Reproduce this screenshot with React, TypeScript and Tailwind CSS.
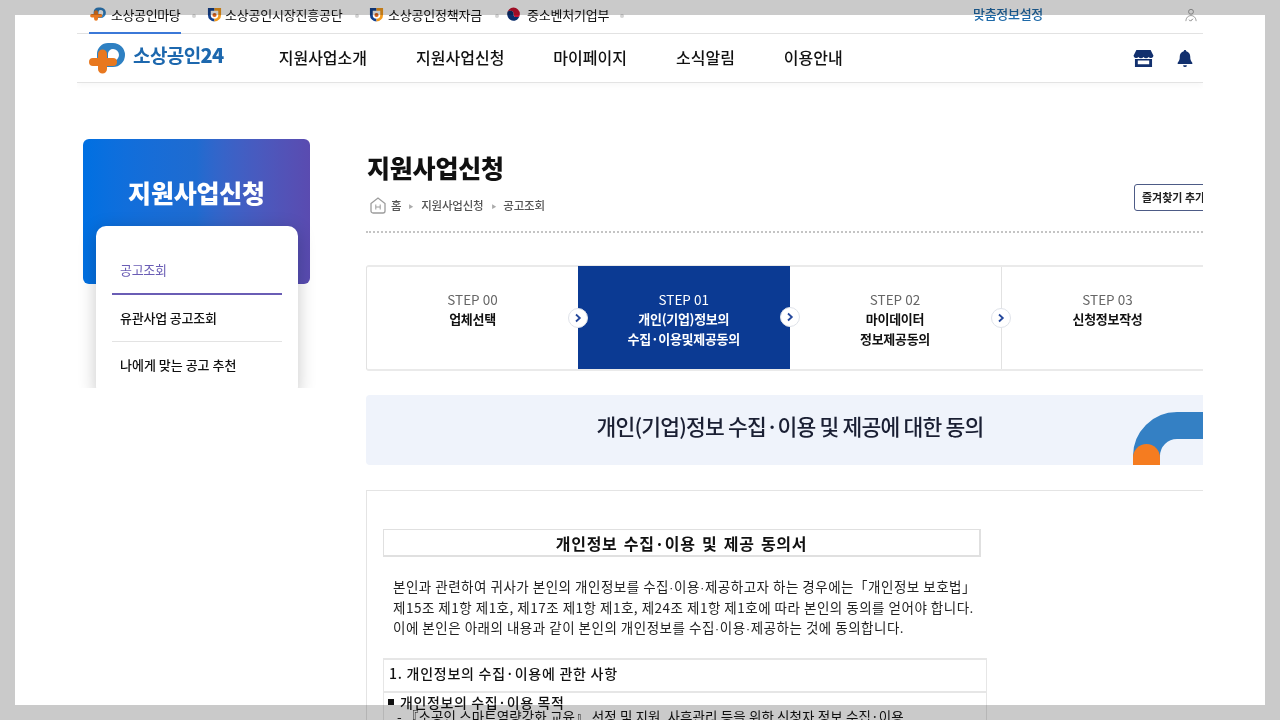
// App.tsx
// 소상공인24 — 지원사업신청 step 01 consent page.
const TOP_LINKS = [
  { label: '소상공인시장진흥공단', icon: 'emblem', left: 'ml-[11px]', gap: 'ml-[3px]', width: 'w-[117px]', dot: 'ml-[13px]' },
  { label: '소상공인정책자금', icon: 'emblem', left: 'ml-[10px]', gap: 'ml-[4px]', width: 'w-[93px]', dot: 'ml-[14px]' },
  { label: '중소벤처기업부', icon: 'taegeuk', left: 'ml-[7px]', gap: 'ml-[6px]', width: 'w-[82px]', dot: 'ml-[11px]' },
];

const NAV = ['지원사업소개', '지원사업신청', '마이페이지', '소식알림', '이용안내'];

const STEPS = [
  { no: 'STEP 00', lines: ['업체선택'], width: 'w-[211px]' },
  { no: 'STEP 01', lines: ['개인(기업)정보의', '수집·이용및제공동의'], active: true, width: 'w-[211.500px]' },
  { no: 'STEP 02', lines: ['마이데이터', '정보제공동의'], width: 'w-[212px]' },
  { no: 'STEP 03', lines: ['신청정보작성'], width: 'w-[212px]' },
];

function LogoMark({ className }: { className: string }) {
  return (
    <svg viewBox="0 0 36 32" className={className}>
      <path d="M8 16V12A11 11 0 0 1 19 1h5a12 12 0 0 1 0 24h-6v-6h6a6 6 0 0 0 0-12 5 5 0 0 0-5 5v4z" fill="#2e80c2" />
      <path d="M9 12a4.500 4.500 0 0 1 9 0v4h6a4 4 0 0 1 0 8h-6v3a4.500 4.500 0 0 1-9 0v-3H4a4 4 0 0 1 0-8h5z" fill="#e8781f" />
    </svg>
  );
}

function Emblem() {
  return (
    <svg viewBox="0 0 16 16" className="h-[15px] w-[15px] shrink-0" fill="none">
      <path d="M8 2.500H2.500v6a5.500 5.500 0 0 0 5.500 5.500" stroke="#14418f" strokeWidth="3" />
      <path d="M8 2.500h5.500v6A5.500 5.500 0 0 1 8 14" stroke="#f39a1c" strokeWidth="3" />
      <circle cx="8" cy="8.500" r="2.200" fill="#d9621c" />
    </svg>
  );
}

function Taegeuk() {
  return (
    <svg viewBox="1.500 1 13 13" className="h-[15px] w-[15px] shrink-0">
      <circle cx="8" cy="7.500" r="6.500" fill="#fff" />
      <path d="M2.500 7a5.500 5.500 0 0 1 11 0 2.750 2.750 0 0 1-5.500 0 2.750 2.750 0 0 0-5.500 0z" fill="#c8102e" />
      <path d="M2.500 7a2.750 2.750 0 0 1 5.500 0 2.750 2.750 0 0 0 5.500 0c0 3-2.500 6-5.500 6S2.500 10 2.500 7z" fill="#0b2d6b" />
    </svg>
  );
}

function Dot() {
  return <span className="mt-[3px] block h-[4px] w-[4px] shrink-0 rounded-full bg-[#d4d4d4]" />;
}

function Mid() {
  return <span className="font-['Liberation_Sans',sans-serif] leading-[0]">·</span>;
}

function StepArrow() {
  return (
    <span className="absolute right-[-10px] top-[41px] z-10 flex h-[20px] w-[20px] items-center justify-center rounded-full border border-[#dfe3ea] bg-white">
      <svg viewBox="0 0 10 10" className="h-[10px] w-[10px]">
        <path d="M3 1.500 6.800 5 3 8.500" fill="none" stroke="#24479b" strokeWidth="1.800" />
      </svg>
    </span>
  );
}

export default function App() {
  return (
    <div className="relative h-[720px] w-[1280px] overflow-hidden bg-white font-['Noto_Sans_CJK_KR','Noto_Sans',sans-serif] text-[#111]">
      <div className="ml-[77px] h-[720px] w-[1126px] overflow-hidden">
        {/* top util bar */}
        <div className="flex h-[34px] items-start border-b border-[#e3e3e3] pl-[12px]">
          <div className="flex h-[34px] w-[92px] items-center border-b-2 border-[#3b78d8] pb-[4px] pl-[1px]">
            <LogoMark className="h-[14px] w-[16px] shrink-0" />
            <span className="ml-[5px] whitespace-nowrap text-[13px] leading-none tracking-[-0.4px]">소상공인마당</span>
          </div>
          <div className="flex h-[29px] items-center">
            <span className="ml-[11px]"><Dot /></span>
            {TOP_LINKS.map(l => (
              <div key={l.label} className="flex items-center">
                <div className={`flex items-center ${l.left}`}>
                  {l.icon === 'emblem' ? <Emblem /> : <Taegeuk />}
                  <span className={`${l.gap} ${l.width} whitespace-nowrap text-[13px] leading-none tracking-[-0.2px]`}>{l.label}</span>
                </div>
                <span className={l.dot}><Dot /></span>
              </div>
            ))}
          </div>
          <span className="ml-[349px] mt-[6px] whitespace-nowrap text-[13px] font-medium leading-[16px] tracking-[-0.3px] text-[#1f6aa8]">맞춤정보설정</span>
          <svg viewBox="0 0 14 16" className="ml-auto mr-[5px] mt-[8px] h-[15px] w-[14px]" fill="none" stroke="#9a9a9a" strokeWidth="1">
            <circle cx="7" cy="4" r="2.600" />
            <path d="M1.500 14c0-3.500 2.500-6 5.500-6s5.500 2.500 5.500 6" />
            <path d="M5 12.500l1.500 1.500 2.500-2.500" stroke="#777" />
          </svg>
        </div>

        {/* main nav */}
        <div className="flex h-[49px] items-center border-b border-[#e3e3e3] pl-[12px] pr-[10px] shadow-[0_3px_6px_rgba(0,0,0,0.03)]">
          <LogoMark className="h-[32px] w-[36px] shrink-0" />
          <span className="ml-[8px] whitespace-nowrap pb-[6px] text-[19px] font-bold leading-none tracking-[-0.6px] text-[#1d68ae]">소상공인<span className="text-[20px] font-black">24</span></span>
          <nav className="ml-[55px] flex items-center gap-[49px] pb-[3px]">
            {NAV.map(n => (
              <span key={n} className="whitespace-nowrap text-[16px] font-medium leading-none">{n}</span>
            ))}
          </nav>
          <svg viewBox="0 0 22 20" className="ml-auto h-[19px] w-[21px]">
            <path d="M3.500 1h15L21.500 7a3 3 0 0 1-5.200 1.500A3.400 3.400 0 0 1 11 8.500a3.400 3.400 0 0 1-5.300 0A3 3 0 0 1 .5 7z" fill="#12306e" />
            <path d="M2 10.500h18V19H2zM5 12v4h12v-4z" fill="#12306e" fillRule="evenodd" />
          </svg>
          <svg viewBox="0 0 16 20" className="ml-[23px] h-[19px] w-[16px]">
            <path d="M8 1c.8 0 1.300.6 1.300 1.300C12 3 13.500 5.300 13.500 8c0 3.500.8 5 2.200 6.500v1.300H.3v-1.300C1.700 13 2.500 11.500 2.500 8c0-2.700 1.500-5 4.200-5.700C6.700 1.600 7.200 1 8 1zM6 17h4a2 2 0 0 1-4 0z" fill="#12306e" />
          </svg>
        </div>

        <div className="flex items-start">
          {/* sidebar */}
          <aside className="ml-[6px] mt-[56px] w-[227px] shrink-0">
            <div className="flex h-[145px] justify-center rounded-[6px] bg-gradient-to-r from-[#0070e2] via-[#1f6bd0] via-50% to-[#5a4bb0] pt-[36px]">
              <h2 className="whitespace-nowrap text-[25px] font-black leading-[34px] tracking-[-0.2px] text-white">지원사업신청</h2>
            </div>
            <div className="-mx-[20px] -mt-[74px] h-[178px] overflow-hidden pl-[33px] pr-[32px] pt-[16px]">
              <ul className="h-[170px] rounded-[10px] bg-white px-[16px] pt-[20px] shadow-[0_4px_18px_rgba(0,0,0,0.22)]">
                <li className="flex h-[49px] items-center border-b-2 border-[#6a5db5] pl-[8px] text-[13px] leading-none tracking-[-0.3px] text-[#6a5db5]">공고조회</li>
                <li className="flex h-[47px] items-center border-b border-[#e3e3e3] pb-[2px] pl-[8px] text-[13px] font-medium leading-none tracking-[-0.2px]">유관사업 공고조회</li>
                <li className="flex h-[47px] items-center border-b border-[#e3e3e3] pb-[2px] pl-[8px] text-[13px] font-medium leading-none">나에게 맞는 공고 추천</li>
              </ul>
            </div>
          </aside>

          {/* main column */}
          <main className="ml-[56px] min-w-0 flex-1">
            <h1 className="mt-[67px] whitespace-nowrap pl-[1px] text-[25px] font-black leading-[34px] tracking-[-0.2px]">지원사업신청</h1>
            <div className="mt-[9px] flex h-[38px] items-start justify-between">
              <div className="mt-[4px] flex items-center pl-[4px] text-[11.500px] font-medium leading-none tracking-[-0.2px] text-[#555]">
                <svg viewBox="0 0 16 17" className="h-[17px] w-[16px]" fill="none" stroke="#9c9c9c" strokeWidth="1.300">
                  <path d="M1 6.500 8 1l7 5.500V14a2 2 0 0 1-2 2H3a2 2 0 0 1-2-2z" />
                  <path d="M5.800 7.500v5M10.200 7.500v5M5.800 10h4.400" strokeWidth="1" />
                </svg>
                <span className="ml-[5px]">홈</span>
                <span className="ml-[7px] text-[5px] text-[#aaa]">▶</span>
                <span className="ml-[8px]">지원사업신청</span>
                <span className="ml-[8px] text-[5px] text-[#aaa]">▶</span>
                <span className="ml-[7px]">공고조회</span>
              </div>
              <button className="-mt-[9px] -mr-[20px] h-[27px] w-[89px] shrink-0 whitespace-nowrap rounded-[3px] border-[1.500px] border-[#4d5b86] bg-white pl-[2px] text-left text-[11px] font-bold leading-none text-[#222]">
                <span className="pl-[5px]">즐겨찾기 추가</span>
              </button>
            </div>
            <div className="h-0 border-b-2 border-dotted border-[#c4c4c4]" />

            {/* steps */}
            <div className="mt-[32px] flex h-[106px] w-[860px] rounded-l-[3px] border-y-2 border-l border-[#eaeaea] border-l-[#e2e2e2]">
              {STEPS.map((s, i) => (
                <div
                  key={s.no}
                  className={`relative shrink-0 text-center ${s.width} ${s.active ? '-mt-[1px] h-[103px] self-start bg-[#0b3a93] pt-[24px] text-white' : 'h-full pt-[23px]'} ${i === 2 ? 'border-r border-[#e2e2e2]' : ''}`}
                >
                  <p className={`text-[13.500px] leading-[19px] ${s.active ? 'text-white' : 'text-[#666]'}`}>{s.no}</p>
                  {s.lines.map(l => (
                    <p key={l} className="text-[13px] font-bold leading-[19.500px] tracking-[-0.3px]">{l}</p>
                  ))}
                  {i < 3 && <StepArrow />}
                </div>
              ))}
            </div>

            {/* banner */}
            <div className="mt-[24px] flex h-[70px] w-[837px] items-center overflow-hidden rounded-l-[4px] bg-[#eff3fb]">
              <p className="w-[837px] shrink-0 whitespace-nowrap pb-[8px] pl-[11px] text-center text-[21.500px] font-medium leading-none tracking-[-0.8px] text-[#1a1f33]">개인(기업)정보 수집·이용 및 제공에 대한 동의</p>
              <svg viewBox="0 0 70 53" className="-ml-[70px] h-[53px] w-[70px] shrink-0 self-end">
                <path d="M13.500 53V44A30.500 30.500 0 0 1 44 13.500h26" fill="none" stroke="#3480c4" strokeWidth="27" />
                <path d="M0 53V45.500a13.500 13.500 0 0 1 27 0V53z" fill="#f57c20" />
              </svg>
            </div>

            {/* consent doc */}
            <div className="mt-[25px] h-[240px] border-l border-t border-[#e4e4e4] pl-[16px] pt-[38px]">
              <div className="flex h-[28px] w-[598px] items-center justify-center border-2 border-[#e0e0e0] border-l border-t text-[16px] font-bold leading-none tracking-[0.7px] [word-spacing:2px]">개인정보 수집·이용 및 제공 동의서</div>
              <div className="ml-[10px] mt-[19px] w-[600px] whitespace-nowrap text-[13.500px] leading-[20.500px] tracking-[0.5px] text-[#222]">
                <p>본인과 관련하여 귀사가 본인의 개인정보를 수집<Mid />이용<Mid />제공하고자 하는 경우에는「개인정보 보호법」</p>
                <p>제15조 제1항 제1호, 제17조 제1항 제1호, 제24조 제1항 제1호에 따라 본인의 동의를 얻어야 합니다.</p>
                <p>이에 본인은 아래의 내용과 같이 본인의 개인정보를 수집<Mid />이용<Mid />제공하는 것에 동의합니다.</p>
              </div>
              <div className="mt-[20px] w-[604px] border-l border-r border-t-2 border-[#e6e6e6]">
                <div className="flex h-[33px] items-center border-b-2 border-[#e6e6e6] pb-[5px] pl-[5px] text-[14px] font-medium leading-none tracking-[0.75px]">1. 개인정보의 수집·이용에 관한 사항</div>
                <div className="flex items-center pl-[4px] pt-[2px] text-[14px] font-medium leading-[14px] tracking-[0.6px]">
                  <span className="mr-[6px] h-[6px] w-[6px] bg-[#111]" />
                  개인정보의 수집·이용 목적
                </div>
                <div className="whitespace-nowrap pl-[13px] text-[13.500px] leading-[14px] tracking-[0.1px]">- 『소공인 스마트역량강화 교육』 선정 및 지원, 사후관리 등을 위한 신청자 정보 수집·이용</div>
              </div>
            </div>
          </main>
        </div>
      </div>

      {/* grey frame over the capture */}
      <div className="pointer-events-none absolute inset-x-0 top-0 h-[15px] bg-[#cacaca] mix-blend-multiply" />
      <div className="pointer-events-none absolute inset-x-0 bottom-0 h-[15px] bg-[#cacaca] mix-blend-multiply" />
      <div className="pointer-events-none absolute bottom-[15px] left-0 top-[15px] w-[15px] bg-[#cacaca] mix-blend-multiply" />
      <div className="pointer-events-none absolute bottom-[15px] right-0 top-[15px] w-[15px] bg-[#cacaca] mix-blend-multiply" />
    </div>
  );
}
